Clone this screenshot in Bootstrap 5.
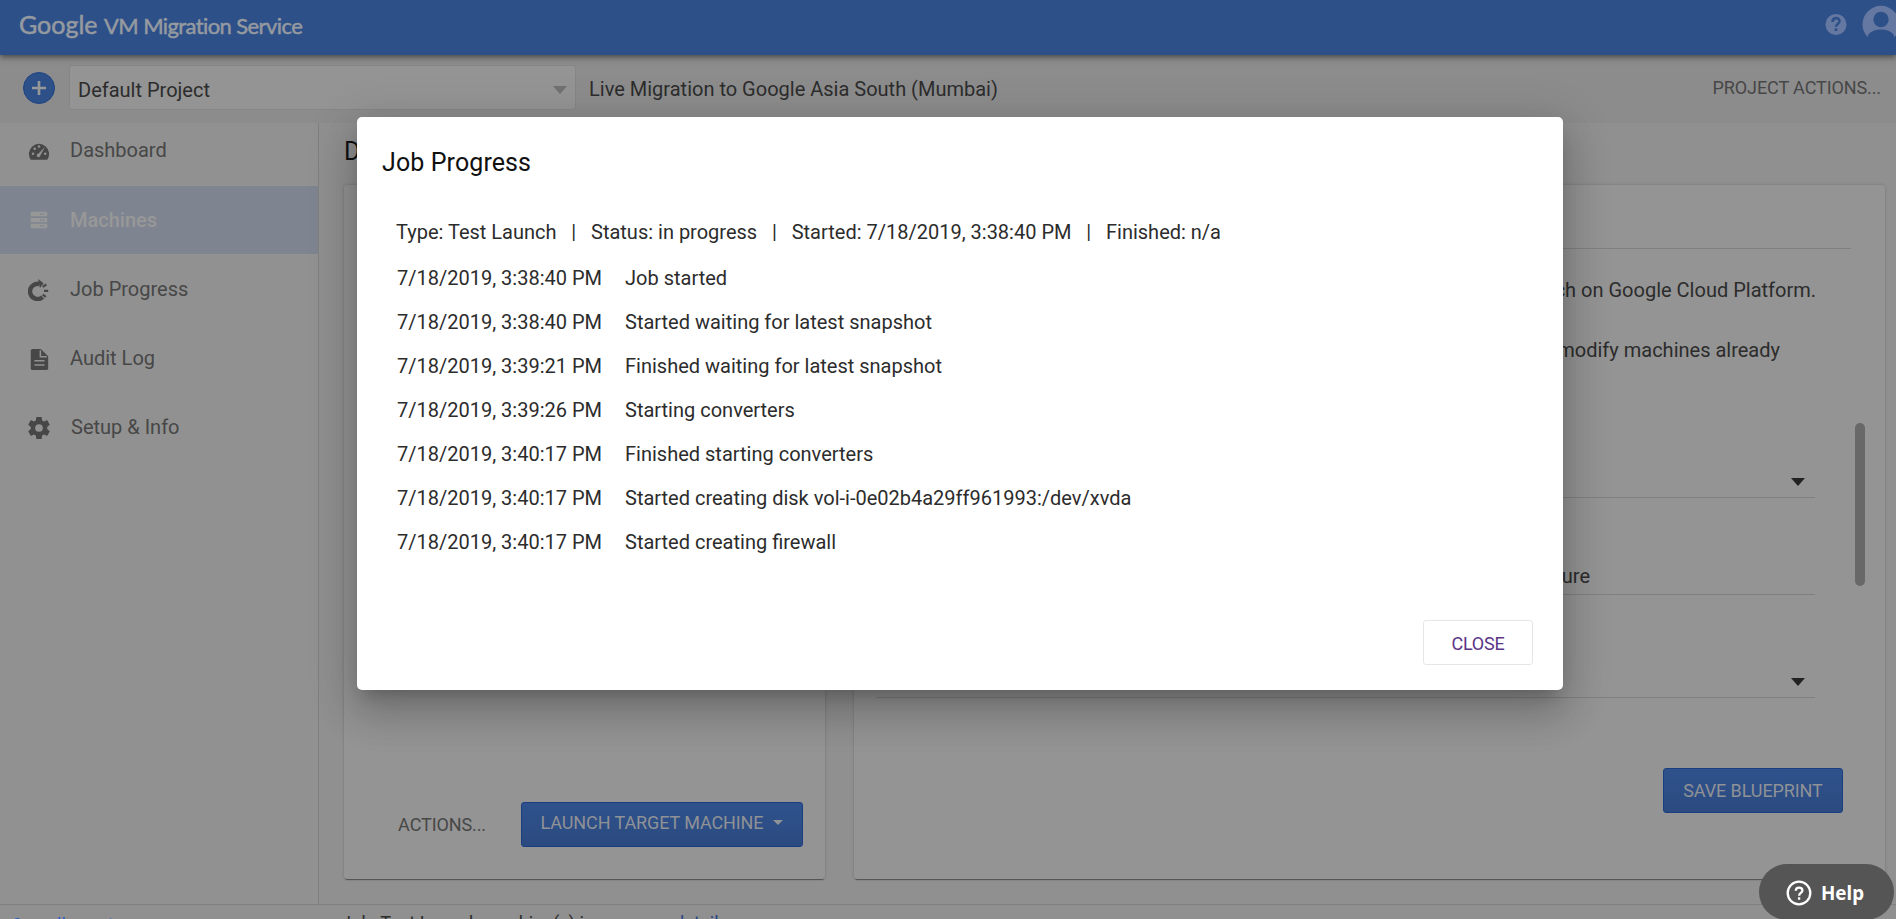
<!DOCTYPE html>
<html lang="en">
<head>
<meta charset="utf-8">
<title>Google VM Migration Service</title>
<link href="https://cdn.jsdelivr.net/npm/bootstrap@5.3.0/dist/css/bootstrap.min.css" rel="stylesheet">
<style>
html,body{height:100%;overflow:hidden}
body{font-family:Roboto,"Liberation Sans",sans-serif;font-size:20px;line-height:24px;background:#909090;color:#2c2c2c}
.topbar{height:55px;background:#2e5089;box-shadow:0 2px 6px rgba(0,0,0,.5);z-index:3;position:relative;padding-left:19px}
.brand{font-family:Lato,sans-serif;font-size:22px;color:#959aa0;line-height:30px;margin-top:-6px;-webkit-text-stroke:.5px #959aa0}
.brand .goog{font-size:25px;width:85px}
.brand .prod{letter-spacing:-.6px}
.tools{height:68px;background:#8c8c8c;padding-left:23px;padding-right:15px}
.plus{width:32px;height:32px;background:#2e5089;border:1px solid #1f4582;margin-bottom:2px}
.projsel{width:507px;height:45px;margin-left:14px;background:#949494;border:1px solid #868686;border-radius:3px;padding:0 8px;margin-bottom:3px}
.livemig{margin-left:13px}
.tri{width:0;height:0;border-left:7px solid transparent;border-right:7px solid transparent;border-top:8px solid #707070}
.tri.dark{border-top-color:#222}
.upper{font-size:18px;color:#474747;letter-spacing:-.1px}
.tools .upper{margin-bottom:2px}
.side{width:319px;background:#919191;border-right:1px solid #7f7f7f}
.side a{height:69px;padding-left:28px;color:#474747;text-decoration:none}
.side a:first-child{height:63px;padding-bottom:9px}
.side a.on{height:68px;background:#7e8490;color:#989898;font-weight:500}
.side svg{width:22px;height:22px;margin:2px 20px 0 0;fill:#474747}
.side a.on svg{fill:#989898;margin-top:0}
.side a:last-child span{padding-left:1px}
.content{height:781px}
.content main{padding-left:25px;padding-right:11px}
.pagehead{font-size:25px;line-height:30px;height:62px;padding-top:14px;color:#111}
.panes{gap:29px}
.pane{background:#949494;border-radius:3px;height:694px;box-shadow:0 2px 1px -1px rgba(0,0,0,.4),0 0 3px rgba(0,0,0,.22)}
.pane1{width:481px;padding:0 22px 32px 0}
.pane1 .upper{margin:0 35px 10px 0}
.btn-b{background:linear-gradient(#2f528c,#2b4a80);border:1px solid #1a3f80;border-radius:3px;height:45px;color:#8f9296;font-size:18px;letter-spacing:-.1px}
.launch{width:282px;padding:0 0 4px}
.launch svg{margin:0 0 3px 10px}
.pane2{width:1031px;padding-left:22px}
.field{border-bottom:1px solid #808080}
.f0{height:64px;margin-right:-36px}
.line1{margin:29px -1px 0 0}
.line2{margin-top:36px;padding-right:35px}
.f1{height:136px;padding:0 10px 11px}
.f2{height:97px;padding:0 225px 6px}
.f3{height:103px;padding:0 10px 11px}
.save{width:180px;margin:70px -28px 0 0;flex-shrink:0}
.bar{width:10px;height:163px;background:#686868;border-radius:5px;margin:238px 20px 0 40px}
.foot{border-top:1px solid #7f7f7f;height:15px;overflow:hidden}
.foot a{text-decoration:none;color:#28458a}
.foot .flink{width:341px;padding:8px 0 0 11px;font-size:18px;flex-shrink:0;color:#2a5fc4}
.fmsg{padding-top:6px;font-size:18.200px}
.dlg{left:357px;top:117px;width:1206px;height:573px;border-radius:5px;background:#fff;z-index:5;box-shadow:0 11px 15px -7px rgba(0,0,0,.2),0 24px 38px 3px rgba(0,0,0,.14),0 9px 46px 8px rgba(0,0,0,.12)}
.dlg h2{font-size:25px;line-height:30px;color:#111;font-weight:400;margin:31px 0 0 25px;letter-spacing:.1px}
.meta{margin:42px 0 22px 39px;height:24px;gap:14.800px}
.logrow{height:44px;padding-left:40px}
.logrow time{width:228px}
.closebtn{width:110px;height:45px;border:1px solid #e6e6e6;border-radius:3px;color:#5a3586;font-size:18px;letter-spacing:-.2px;margin:0 30px 25px 0;padding-top:3px}
.helpfab{right:2px;top:864px;width:135px;height:56px;border-radius:28px;background:#555;color:#fff;font:700 18.800px "Noto Sans",sans-serif;z-index:6}
.helpfab svg{margin:2px 9px 0 27px}
.helpfab span{padding-top:2px}
</style>
</head>
<body>
<header class="topbar d-flex align-items-center">
  <div class="brand d-flex align-items-baseline"><span class="goog">Google</span><span class="prod">VM Migration Service</span></div>
  <svg class="ms-auto" width="71" height="55" viewBox="1825 0 71 55">
    <circle cx="1836" cy="24.5" r="10.5" fill="#6478a1"/>
    <path d="M1832.5 22c0-5 7-5 7-.8 0 2.6-3.4 2.6-3.4 5.6M1836 28.300v2.600" fill="none" stroke="#2e5089" stroke-width="2.600"/>
    <path d="M1867.500 37a18.500 18.500 0 1 1 27 0c-1-5-7-7.500-13.500-7.500s-12.500 2.500-13.500 7.500z" fill="#6478a1"/><circle cx="1881" cy="19.500" r="7.700" fill="#2e5089"/>
  </svg>
</header>
<div class="tools d-flex align-items-center">
  <span class="plus rounded-circle d-flex align-items-center justify-content-center"><svg width="14" height="14" viewBox="0 0 14 14"><path d="M7 0v14M0 7h14" stroke="#989898" stroke-width="2.600"/></svg></span>
  <div class="projsel d-flex align-items-center justify-content-between"><span class="pt-1">Default Project</span><i class="tri mt-1"></i></div>
  <span class="livemig">Live Migration to Google Asia South (Mumbai)</span>
  <span class="upper ms-auto">PROJECT ACTIONS...</span>
</div>
<div class="content d-flex">
  <nav class="side flex-shrink-0">
    <a class="d-flex align-items-center" href="#"><svg viewBox="0 0 24 24"><path d="M3 21.500A11 11 0 1 1 21 21.500z"/><g fill="#919191"><circle cx="5.500" cy="15" r="1.400"/><circle cx="7.300" cy="9.500" r="1.400"/><circle cx="12" cy="7" r="1.400"/><circle cx="18.800" cy="15" r="1.400"/><path d="M18.500 7.500l-5 9.300a2 2 0 1 1-2-2z"/></g></svg><span>Dashboard</span></a>
    <a class="on d-flex align-items-center" href="#"><svg viewBox="0 0 24 24"><path d="M4.500 3h15A1.500 1.500 0 0 1 21 4.500V8H3V4.500A1.500 1.500 0 0 1 4.500 3zM3 9.800h18v4.600H3zM3 16.200h18v3.300a1.500 1.500 0 0 1-1.500 1.500h-15A1.500 1.500 0 0 1 3 19.500z"/><path d="M13 5.500h5M13 12h5M13 18.500h5" stroke="#7e8490" stroke-width="1.500" stroke-dasharray="2 1"/></svg><span>Machines</span></a>
    <a class="d-flex align-items-center" href="#"><svg viewBox="0 0 24 24"><path d="M16 19.800A8.300 8.300 0 1 1 12.500 5.500" fill="none" stroke="#474747" stroke-width="4.800"/><path d="M11 0l6 4.700-4 5z"/><path d="M16 8.500l4-2.500M17.500 13h4.500M16 17l3.500 2.500" stroke="#474747" stroke-width="2.300"/></svg><span>Job Progress</span></a>
    <a class="d-flex align-items-center" href="#"><svg viewBox="0 0 24 24"><path d="M5 1h9l8 8v13a2 2 0 0 1-2 2H5a2 2 0 0 1-2-2V3a2 2 0 0 1 2-2z"/><path d="M13.500 2.500V9.500h7M7 14h11M7 18.500h11" fill="none" stroke="#919191" stroke-width="1.700"/></svg><span>Audit Log</span></a>
    <a class="d-flex align-items-center" href="#"><svg viewBox="2 2 20 20"><path d="M19.430 12.980c.04-.32.07-.64.07-.98s-.03-.66-.07-.98l2.110-1.650c.19-.15.24-.42.12-.64l-2-3.460c-.12-.22-.39-.3-.61-.22l-2.490 1c-.52-.4-1.080-.73-1.690-.98l-.38-2.650C14.460 2.180 14.250 2 14 2h-4c-.25 0-.46.18-.49.42l-.38 2.650c-.61.25-1.170.59-1.690.98l-2.490-1c-.23-.09-.49 0-.61.22l-2 3.460c-.13.22-.07.49.12.64l2.110 1.650c-.04.32-.07.65-.07.98s.03.66.07.98l-2.110 1.650c-.19.15-.24.42-.12.64l2 3.460c.12.22.39.3.61.22l2.490-1c.52.4 1.080.73 1.690.98l.38 2.650c.03.24.24.42.49.42h4c.25 0 .46-.18.49-.42l.38-2.650c.61-.25 1.170-.59 1.690-.98l2.490 1c.23.09.49 0 .61-.22l2-3.460c.12-.22.07-.49-.12-.64zM12 15.500a3.500 3.500 0 1 1 0-7 3.500 3.500 0 0 1 0 7z"/></svg><span>Setup &amp; Info</span></a>
  </nav>
  <main class="flex-grow-1">
    <div class="pagehead">D</div>
    <div class="panes d-flex">
      <section class="pane pane1 d-flex align-items-end justify-content-end">
        <span class="upper">ACTIONS...</span>
        <button class="btn-b launch">LAUNCH TARGET MACHINE<svg width="10" height="5"><path d="M0 0h10l-5 5z" fill="#8f9296"/></svg></button>
      </section>
      <section class="pane pane2 d-flex">
        <div class="flex-grow-1 d-flex flex-column">
          <div class="field f0"></div>
          <div class="line1 text-end">ch on Google Cloud Platform.</div>
          <div class="line2 text-end">modify machines already</div>
          <div class="field f1 d-flex justify-content-end align-items-end"><i class="tri dark"></i></div>
          <div class="field f2 d-flex justify-content-end align-items-end"><span>ure</span></div>
          <div class="field f3 d-flex justify-content-end align-items-end"><i class="tri dark"></i></div>
          <button class="btn-b save align-self-end">SAVE BLUEPRINT</button>
        </div>
        <div class="bar"></div>
      </section>
    </div>
  </main>
</div>
<footer class="foot d-flex"><a class="flink" href="#">Overall event</a><span class="fmsg">Job: Test Launch machine(s) in progress <a href="#">details</a></span></footer>
<div class="dlg position-absolute d-flex flex-column" role="dialog">
  <h2>Job Progress</h2>
  <div class="meta d-flex"><span>Type: Test Launch</span><span>|</span><span>Status: in progress</span><span>|</span><span>Started: 7/18/2019, 3:38:40 PM</span><span>|</span><span>Finished: n/a</span></div>
  <div class="logrow d-flex"><time>7/18/2019, 3:38:40 PM</time><span>Job started</span></div>
  <div class="logrow d-flex"><time>7/18/2019, 3:38:40 PM</time><span>Started waiting for latest snapshot</span></div>
  <div class="logrow d-flex"><time>7/18/2019, 3:39:21 PM</time><span>Finished waiting for latest snapshot</span></div>
  <div class="logrow d-flex"><time>7/18/2019, 3:39:26 PM</time><span>Starting converters</span></div>
  <div class="logrow d-flex"><time>7/18/2019, 3:40:17 PM</time><span>Finished starting converters</span></div>
  <div class="logrow d-flex"><time>7/18/2019, 3:40:17 PM</time><span>Started creating disk vol-i-0e02b4a29ff961993:/dev/xvda</span></div>
  <div class="logrow d-flex"><time>7/18/2019, 3:40:17 PM</time><span>Started creating firewall</span></div>
  <button class="closebtn bg-white align-self-end mt-auto">CLOSE</button>
</div>
<a class="helpfab position-absolute d-flex align-items-center text-decoration-none" href="#"><svg width="26" height="26" viewBox="0 0 26 26"><circle cx="13" cy="13" r="11.300" fill="none" stroke="#fff" stroke-width="2.300"/><path d="M9.800 10.800c0-4.300 6.600-4 6.600-.3 0 2.500-3.300 2.400-3.300 5.200M13.100 17.300v2.500" fill="none" stroke="#fff" stroke-width="2.300"/></svg><span>Help</span></a>
<script src="https://cdn.jsdelivr.net/npm/bootstrap@5.3.0/dist/js/bootstrap.bundle.min.js"></script>
</body>
</html>
